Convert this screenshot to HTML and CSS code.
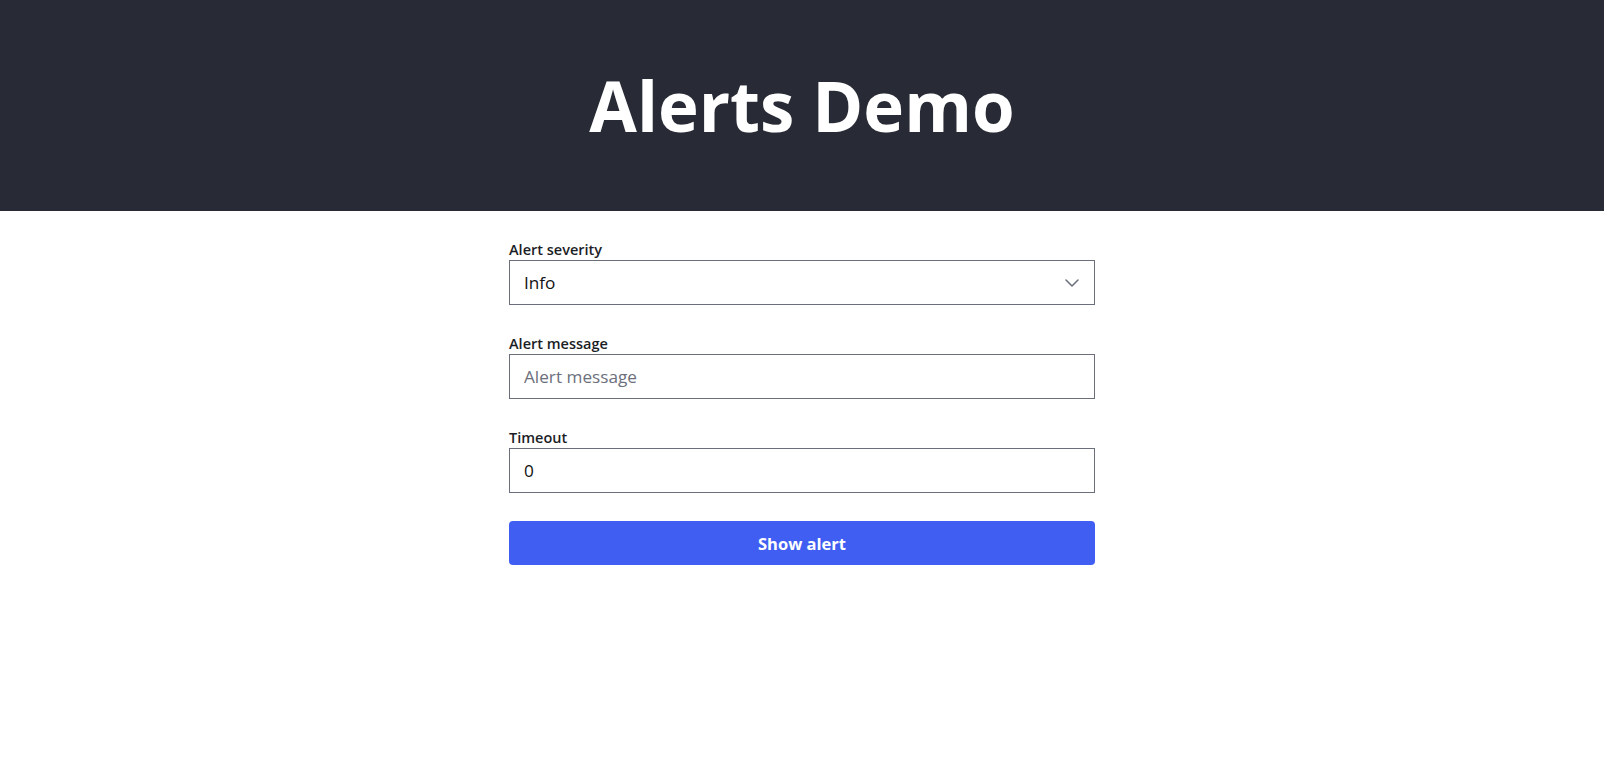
FILE: index.html
```html
<!DOCTYPE html>
<html lang="en">
<head>
<meta charset="utf-8">
<title>Alerts Demo</title>
<link rel="stylesheet" href="styles.css">
</head>
<body>
<header class="hero">
  <h1 class="hero-title">Alerts Demo</h1>
</header>
<main class="page">
  <form class="alert-form">
    <div class="field">
      <label class="field-label" for="severity">Alert severity</label>
      <div class="select-wrap">
        <select id="severity" class="control select">
          <option>Info</option>
          <option>Success</option>
          <option>Warning</option>
          <option>Error</option>
        </select>
        <svg class="chevron" viewBox="0 0 14 8" width="14" height="8" aria-hidden="true"><path d="M1 1l6 6 6-6" fill="none" stroke="#6b6f7c" stroke-width="1.5" stroke-linecap="round" stroke-linejoin="round"/></svg>
      </div>
    </div>
    <div class="field">
      <label class="field-label" for="message">Alert message</label>
      <input id="message" class="control" type="text" placeholder="Alert message">
    </div>
    <div class="field">
      <label class="field-label" for="timeout">Timeout</label>
      <input id="timeout" class="control" type="text" value="0">
    </div>
    <button type="button" class="submit">Show alert</button>
  </form>
</main>
</body>
</html>
```

FILE: styles.css
```css
* { box-sizing: border-box; }
html, body { margin: 0; padding: 0; }
body {
  font-family: "Open Sans", "Noto Sans", sans-serif;
  background: #ffffff;
  color: #1c1e26;
  padding-right: 7px;
}
.hero {
  background: #282b35;
  height: 211px;
  display: flex;
  align-items: center;
  justify-content: center;
}
.hero-title {
  margin: 0;
  color: #ffffff;
  font-size: 69px;
  font-weight: 700;
  line-height: 1;
}
.page {
  display: flex;
  justify-content: center;
  padding-top: 28px;
}
.alert-form {
  width: 586px;
  display: flex;
  flex-direction: column;
}
.field {
  display: flex;
  flex-direction: column;
  margin-bottom: 28px;
}
.field-label {
  font-size: 14.5px;
  font-weight: 600;
  line-height: 21px;
  color: #1c1e26;
}
.control {
  height: 45px;
  width: 100%;
  border: 1px solid #6b6f7c;
  border-radius: 0;
  background: #fff;
  padding: 0 14px;
  font-family: "Open Sans", "Noto Sans", sans-serif;
  font-size: 17.2px;
  color: #111;
  outline: none;
}
.control::placeholder { color: #6b6f7c; opacity: 1; }
.select-wrap { position: relative; }
.select {
  appearance: none;
  -webkit-appearance: none;
}
.chevron {
  position: absolute;
  right: 16px;
  top: 19px;
  pointer-events: none;
}
.submit {
  height: 44px;
  border: none;
  border-radius: 4px;
  background: #405ff2;
  color: #fff;
  font-family: "Open Sans", "Noto Sans", sans-serif;
  font-size: 16.5px;
  font-weight: 700;
  cursor: pointer;
}
```
